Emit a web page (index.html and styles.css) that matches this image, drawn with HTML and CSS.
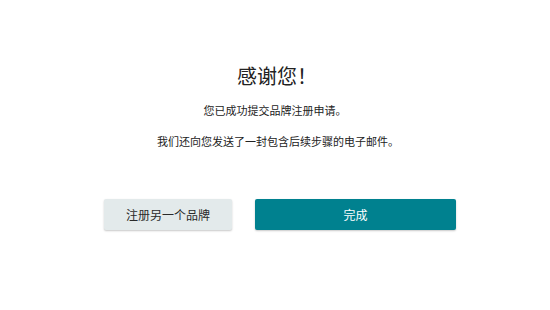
FILE: index.html
```html
<!DOCTYPE html>
<html lang="zh-CN">
<head>
<meta charset="utf-8">
<link rel="stylesheet" href="styles.css">
</head>
<body>
<main class="page">
  <h1 class="title">感谢您！</h1>
  <p class="msg msg-first">您已成功提交品牌注册申请。</p>
  <p class="msg msg-second">我们还向您发送了一封包含后续步骤的电子邮件。</p>
  <div class="actions">
    <button class="btn btn-secondary" type="button">注册另一个品牌</button>
    <button class="btn btn-primary" type="button">完成</button>
  </div>
</main>
</body>
</html>
```
FILE: styles.css
```css
html, body {
  margin: 0;
  padding: 0;
  background: #ffffff;
}
body {
  width: 550px;
  height: 310px;
  overflow: hidden;
  font-family: "Noto Sans CJK SC", "Noto Sans", sans-serif;
  color: #2b2b2b;
}
.page {
  padding-top: 64px;
  display: flex;
  flex-direction: column;
  align-items: center;
}
.title {
  margin: 0;
  font-size: 20px;
  line-height: 24px;
  font-weight: 400;
  color: #222;
  padding-left: 4px;
}
.msg {
  margin: 0;
  font-size: 11px;
  line-height: 16px;
  color: #222;
}
.msg-first {
  margin-top: 14px;
}
.msg-second {
  margin-top: 15px;
  padding-left: 6px;
}
.actions {
  margin-top: 50px;
  display: flex;
  gap: 23px;
  padding-left: 10px;
}
.btn {
  height: 31px;
  border: 0;
  border-radius: 2px;
  font-family: inherit;
  font-size: 12px;
  padding: 0;
  cursor: pointer;
  box-shadow: 0 1px 2px rgba(0, 0, 0, 0.22);
}
.btn-secondary {
  width: 128px;
  background: #e3eaeb;
  color: #2a2a2a;
}
.btn-primary {
  width: 201px;
  background: #00818f;
  color: #ffffff;
}
```
